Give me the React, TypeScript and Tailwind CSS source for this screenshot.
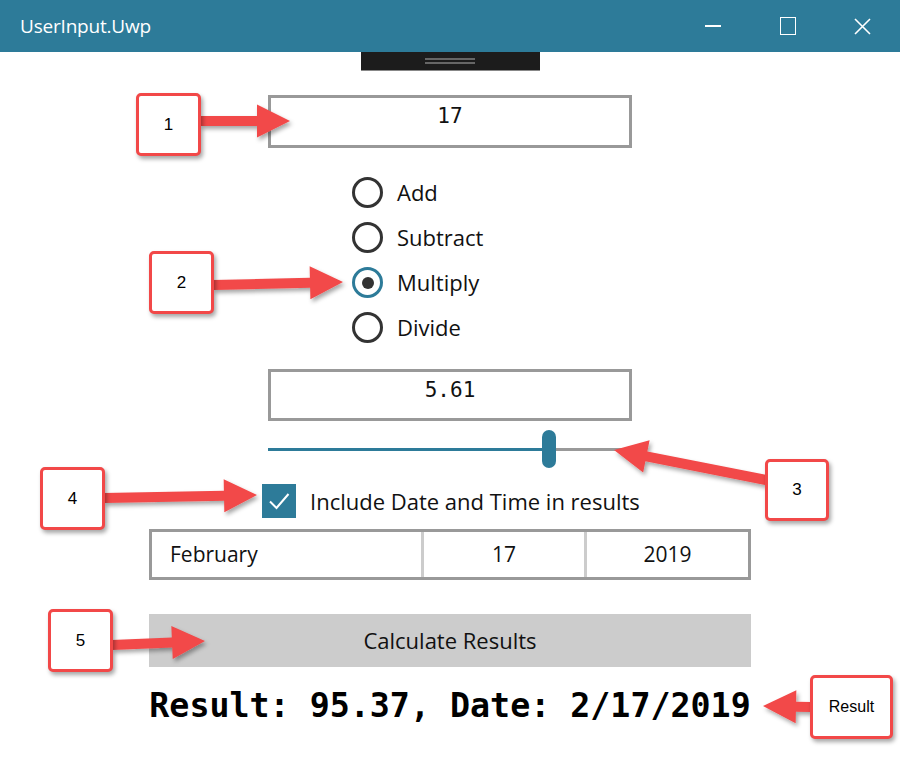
import React from "react";

const RED = "#f24848";

type Pt = [number, number];

// builds a fat arrow polygon from tail to tip
const arrowPoints = (from: Pt, to: Pt, shaft = 10, headL = 33, headW = 33) => {
  const [x1, y1] = from;
  const [x2, y2] = to;
  const len = Math.hypot(x2 - x1, y2 - y1);
  const ux = (x2 - x1) / len;
  const uy = (y2 - y1) / len;
  const px = -uy;
  const py = ux;
  const bx = x2 - ux * headL;
  const by = y2 - uy * headL;
  const pts: Pt[] = [
    [x1 + (px * shaft) / 2, y1 + (py * shaft) / 2],
    [bx + (px * shaft) / 2, by + (py * shaft) / 2],
    [bx + (px * headW) / 2, by + (py * headW) / 2],
    [x2, y2],
    [bx - (px * headW) / 2, by - (py * headW) / 2],
    [bx - (px * shaft) / 2, by - (py * shaft) / 2],
    [x1 - (px * shaft) / 2, y1 - (py * shaft) / 2],
  ];
  return pts.map((p) => p.join(",")).join(" ");
};

const arrows: [Pt, Pt][] = [
  [[200, 121], [290, 121]],
  [[213, 285], [343, 282]],
  [[766, 480], [614, 450]],
  [[104, 498], [257, 495]],
  [[112, 645], [205, 641]],
  [[811, 707], [763, 706]],
];

const Callout = ({ label, className }: { label: string; className: string }) => (
  <div
    className={`absolute flex items-center justify-center bg-white border-[3px] border-[#f24848] rounded-[5px] shadow-[2px_3px_4px_rgba(0,0,0,0.35)] font-['Liberation_Sans',Arial,sans-serif] text-black ${className}`}
  >
    {label}
  </div>
);

const TitleBar = () => (
  <div className="h-[52px] bg-[#2d7b99] flex items-center text-white">
    <div className="pl-5 text-[19px] font-['Open_Sans',sans-serif] tracking-[-0.2px] flex-1">
      UserInput.Uwp
    </div>
    <div className="w-[75px] h-full flex items-center justify-center">
      <div className="w-[16px] h-[1.5px] bg-white" />
    </div>
    <div className="w-[75px] h-full flex items-center justify-center">
      <div className="w-[16px] h-[18px] border-[1.5px] border-white" />
    </div>
    <div className="w-[75px] h-full flex items-center justify-center">
      <svg width="17" height="17" viewBox="0 0 17 17">
        <path d="M1 1 L16 16 M16 1 L1 16" stroke="white" strokeWidth="1.6" />
      </svg>
    </div>
  </div>
);

const Radio = ({ label, checked }: { label: string; checked?: boolean }) => (
  <div className="h-[45px] flex items-center">
    <div
      className={`w-[31px] h-[31px] rounded-full border-[3px] flex items-center justify-center ${
        checked ? "border-[#2d7b99]" : "border-[#333333]"
      }`}
    >
      {checked && <div className="w-[12px] h-[12px] rounded-full bg-[#333333]" />}
    </div>
    <span className="ml-[14px] text-[22px] text-[#111]">{label}</span>
  </div>
);

export default function App() {
  return (
    <div className="relative w-[900px] h-[769px] bg-white overflow-hidden font-['Open_Sans',sans-serif]">
      <TitleBar />
      <div className="flex flex-col items-center">
        <div className="w-[179px] h-[19px] bg-[#1c1c1c] flex flex-col items-center justify-center gap-[2px] border-b border-[#888]">
          <div className="w-[50px] h-[2px] bg-[#666]" />
          <div className="w-[50px] h-[2px] bg-[#666]" />
        </div>

        <div className="mt-[24px] w-[364px] h-[53px] border-[3px] border-[#999999] pt-[5px] text-center text-[21px] leading-[26px] font-['DejaVu_Sans_Mono',monospace] text-[#111]">
          17
        </div>

        <div className="mt-[22px] w-[364px] pl-[84px] flex flex-col">
          <Radio label="Add" />
          <Radio label="Subtract" />
          <Radio label="Multiply" checked />
          <Radio label="Divide" />
        </div>

        <div className="mt-[19px] w-[364px] h-[52px] border-[3px] border-[#999999] pt-[5px] text-center text-[21px] leading-[26px] font-['DejaVu_Sans_Mono',monospace] text-[#111]">
          5.61
        </div>

        <div className="mt-[9px] w-[364px] h-[38px] flex items-center pr-[4px]">
          <div className="w-[274px] h-[3px] bg-[#2d7b99]" />
          <div className="w-[14px] h-[38px] rounded-[7px] bg-[#2d7b99]" />
          <div className="flex-1 h-[3px] bg-[#999999]" />
        </div>

        <div className="mt-[16px] w-[602px] pl-[113px] h-[34px] flex items-center">
          <div className="w-[34px] h-[34px] bg-[#2d7b99] flex items-center justify-center">
            <svg width="24" height="24" viewBox="0 0 24 24">
              <path d="M3 12.5 L9.5 19 L21.5 5" fill="none" stroke="white" strokeWidth="2" />
            </svg>
          </div>
          <span className="ml-[14px] text-[22px] text-[#111]">Include Date and Time in results</span>
        </div>

        <div className="mt-[11px] w-[602px] h-[51px] border-[3px] border-[#999999] flex text-[21px] text-[#111]">
          <div className="w-[272px] flex items-center pl-[18px] border-r-[3px] border-[#cccccc]">February</div>
          <div className="w-[163px] flex items-center justify-center border-r-[3px] border-[#cccccc]">17</div>
          <div className="flex-1 flex items-center justify-center">2019</div>
        </div>

        <div className="mt-[34px] w-[602px] h-[53px] bg-[#cccccc] flex items-center justify-center text-[22px] text-[#111]">
          Calculate Results
        </div>

        <div className="mt-[19px] w-[602px] h-[40px] leading-[40px] text-center text-[33.3px] font-bold font-['DejaVu_Sans_Mono',monospace] text-black whitespace-nowrap">
          Result: 95.37, Date: 2/17/2019
        </div>
      </div>

      <svg className="absolute left-0 top-0 pointer-events-none" width="900" height="769">
        <defs>
          <filter id="sh" x="-20%" y="-50%" width="140%" height="200%">
            <feDropShadow dx="2" dy="3" stdDeviation="2" floodColor="#000" floodOpacity="0.35" />
          </filter>
        </defs>
        {arrows.map(([a, b], i) => (
          <polygon key={i} points={arrowPoints(a, b)} fill={RED} filter="url(#sh)" />
        ))}
      </svg>

      <Callout label="1" className="left-[136px] top-[93px] w-[65px] h-[63px] text-[17px]" />
      <Callout label="2" className="left-[149px] top-[251px] w-[65px] h-[63px] text-[17px]" />
      <Callout label="3" className="left-[765px] top-[459px] w-[64px] h-[62px] text-[17px]" />
      <Callout label="4" className="left-[40px] top-[467px] w-[65px] h-[63px] text-[17px]" />
      <Callout label="5" className="left-[48px] top-[609px] w-[65px] h-[63px] text-[17px]" />
      <Callout label="Result" className="left-[810px] top-[675px] w-[83px] h-[64px] text-[16px]" />
    </div>
  );
}
